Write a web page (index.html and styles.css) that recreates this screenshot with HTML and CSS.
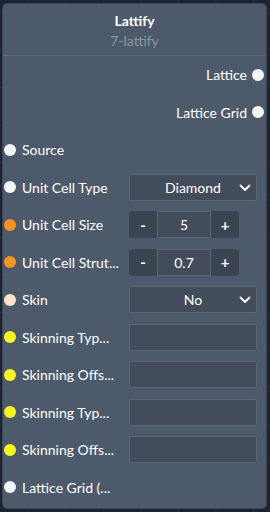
FILE: index.html
```html
<!DOCTYPE html>
<html>
<head>
    <title>Lattify</title>
    <link rel="stylesheet" href="styles.css">
</head>
<body>
    <div class="node">
        <div class="node-header">
            <div class="node-title">Lattify</div>
            <div class="node-id">7-lattify</div>
        </div>

        <!-- Outputs -->
        <div class="row output">
            <span class="label">Lattice</span>
            <span class="dot white"></span>
        </div>
        <div class="row output">
            <span class="label">Lattice Grid</span>
            <span class="dot white"></span>
        </div>

        <!-- Inputs -->
        <div class="row">
            <span class="dot white"></span>
            <span class="label">Source</span>
        </div>
        <div class="row">
            <span class="dot white"></span>
            <span class="label">Unit Cell Type</span>
            <div class="select">
                <span>Diamond</span>
                <svg class="chevron" width="12" height="8" viewBox="0 0 12 8"><path d="M1.5 1.5 L6 6 L10.5 1.5" fill="none" stroke="#fff" stroke-width="1.8" stroke-linecap="round" stroke-linejoin="round"/></svg>
            </div>
        </div>
        <div class="row">
            <span class="dot orange"></span>
            <span class="label">Unit Cell Size</span>
            <div class="number">
                <span class="btn">-</span>
                <span class="value">5</span>
                <span class="btn">+</span>
            </div>
        </div>
        <div class="row">
            <span class="dot orange"></span>
            <span class="label">Unit Cell Strut...</span>
            <div class="number">
                <span class="btn">-</span>
                <span class="value">0.7</span>
                <span class="btn">+</span>
            </div>
        </div>
        <div class="row">
            <span class="dot peach"></span>
            <span class="label">Skin</span>
            <div class="select">
                <span>No</span>
                <svg class="chevron" width="12" height="8" viewBox="0 0 12 8"><path d="M1.5 1.5 L6 6 L10.5 1.5" fill="none" stroke="#fff" stroke-width="1.8" stroke-linecap="round" stroke-linejoin="round"/></svg>
            </div>
        </div>
        <div class="row">
            <span class="dot yellow"></span>
            <span class="label">Skinning Typ...</span>
            <div class="field"></div>
        </div>
        <div class="row">
            <span class="dot yellow"></span>
            <span class="label">Skinning Offs...</span>
            <div class="field"></div>
        </div>
        <div class="row">
            <span class="dot yellow"></span>
            <span class="label">Skinning Typ...</span>
            <div class="field"></div>
        </div>
        <div class="row">
            <span class="dot yellow"></span>
            <span class="label">Skinning Offs...</span>
            <div class="field"></div>
        </div>
        <div class="row">
            <span class="dot white"></span>
            <span class="label">Lattice Grid (...</span>
        </div>
    </div>
</body>
</html>
```

FILE: styles.css
```css
body {
    margin: 0;
    height: 512px;
    overflow: hidden;
    font-family: 'Lato', 'DejaVu Sans', sans-serif;
    background-color: #1d2431;
    background-image:
        linear-gradient(90deg, #262e3c 1px, transparent 1px),
        linear-gradient(#262e3c 1px, transparent 1px);
    background-size: 37.5px 37.5px;
    background-position: 28px 12px;
    color: #FFFFFF;
}

.node {
    margin: 4px 0 0 3px;
    width: 263px;
    height: 504px;
    box-sizing: border-box;
    background: #4d5a6b;
    border-radius: 4px;
    box-shadow: 0 0 0 1px #3a4452;
}

.node-header {
    height: 52px;
    border-bottom: 1px solid #5e6a7a;
    display: flex;
    flex-direction: column;
    align-items: center;
    padding-top: 8px;
    box-sizing: border-box;
}

.node-title {
    font-size: 14px;
    font-weight: bold;
    line-height: 17px;
}

.node-id {
    font-size: 14px;
    line-height: 17px;
    margin-top: 3px;
    color: #8995a4;
}

.row {
    height: 37.5px;
    display: flex;
    align-items: center;
    font-size: 14px;
}

.output {
    justify-content: flex-end;
}

.output .label {
    margin-right: 5px;
}

.dot {
    width: 12px;
    height: 12px;
    border-radius: 50%;
    flex: none;
    margin-left: 1px;
}

.output .dot {
    margin-left: 0;
    margin-right: 2px;
}

.white { background: #f4f5f7; }
.orange { background: #f7931e; }
.peach { background: #fde3cc; }
.yellow { background: #f6f51c; }

.row .dot + .label {
    margin-left: 6px;
    width: 100px;
    white-space: nowrap;
    flex: none;
}

.select, .field {
    margin-left: 7px;
    width: 128px;
    height: 27px;
    box-sizing: border-box;
    background: #424c5a;
    border: 1px solid #5b6777;
    border-radius: 2px;
}

.select {
    position: relative;
    display: flex;
    align-items: center;
    justify-content: center;
    font-size: 14px;
}

.chevron {
    position: absolute;
    right: 5px;
    top: 9px;
}

.number {
    margin-left: 7px;
    width: 110px;
    height: 27px;
    display: flex;
    border-radius: 3px;
    overflow: hidden;
    background: #3b4451;
}

.number .btn {
    width: 28px;
    display: flex;
    align-items: center;
    justify-content: center;
    font-weight: bold;
    font-size: 15px;
}

.number .value {
    flex: 1;
    display: flex;
    align-items: center;
    justify-content: center;
    background: #424c5a;
    border: 1px solid #5b6777;
    font-size: 14px;
}
```
